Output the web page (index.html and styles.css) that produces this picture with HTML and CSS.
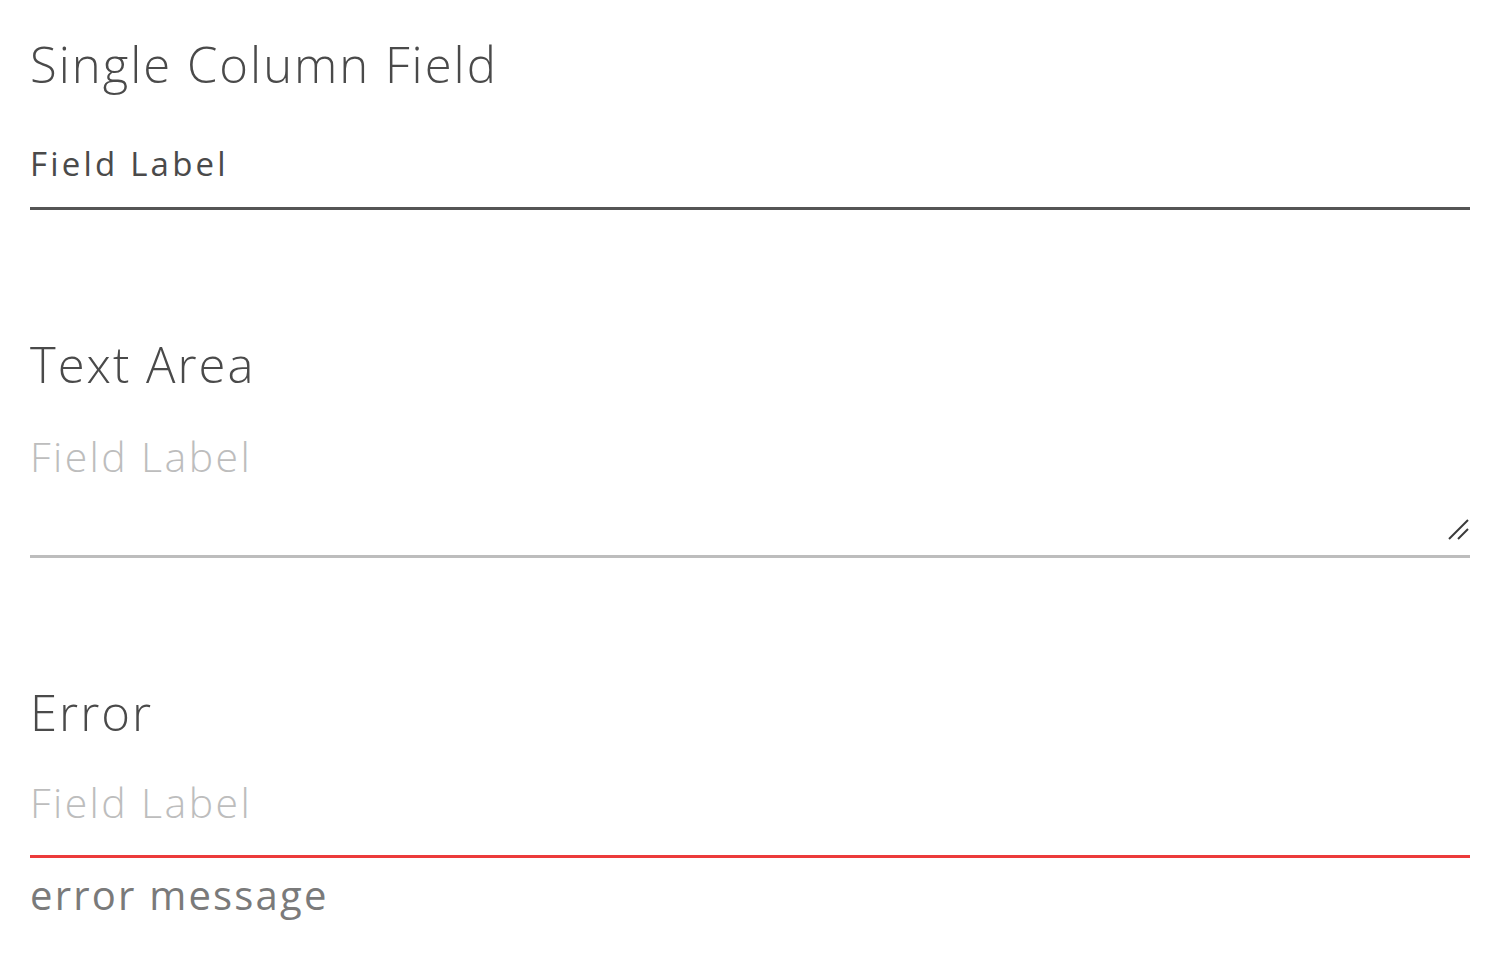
FILE: index.html
```html
<!DOCTYPE html>
<html>
<head>
  <!-- Styles for the form fields -->
  <link rel="stylesheet" href="styles.css">
</head>

<body>

  <!-- Single column input, focused, label floated up -->
  <section class="field-group">
    <h2 class="group-title">Single Column Field</h2>
    <div class="field field-active">
      <span class="field-label">Field Label</span>
    </div>
  </section>

  <!-- Text area with resize handle -->
  <section class="field-group">
    <h2 class="group-title">Text Area</h2>
    <div class="field field-textarea">
      <span class="field-placeholder">Field Label</span>
      <svg class="resizer" width="22" height="22" viewBox="0 0 22 22">
        <path d="M2 21 L21 2" stroke="#3a3a3a" stroke-width="2"/>
        <path d="M11 21 L21 11" stroke="#3a3a3a" stroke-width="2"/>
      </svg>
    </div>
  </section>

  <!-- Field in error state -->
  <section class="field-group">
    <h2 class="group-title">Error</h2>
    <div class="field field-error">
      <span class="field-placeholder">Field Label</span>
    </div>
    <div class="error-message">error message</div>
  </section>

</body>
</html>
```

FILE: styles.css
```css
/* Page */
body {
  margin: 0;
  padding: 40px 30px 30px 30px;
  font-family: "Open Sans", "Noto Sans", sans-serif;
  background: #fff;
  color: #555;
}

/* Each block: title + field */
.field-group {
  margin-bottom: 130px;
}

.field-group:last-child {
  margin-bottom: 0;
}

.group-title {
  margin: 0;
  font-size: 49px;
  font-weight: 300;
  line-height: 48px;
  letter-spacing: 2px;
  color: #4a4a4a;
}

/* The field with its underline */
.field {
  position: relative;
  border-bottom: 3px solid #bdbdbd;
}

.field-active {
  margin-top: 56px;
  padding-bottom: 23px;
  border-bottom-color: #555;
}

.field-label {
  display: block;
  font-size: 33px;
  line-height: 40px;
  letter-spacing: 3.2px;
  color: #4a4a4a;
}

.field-placeholder {
  display: block;
  font-size: 41px;
  font-weight: 300;
  line-height: 46px;
  letter-spacing: 2.4px;
  color: #bdbdbd;
}

.field-textarea {
  margin-top: 45px;
  height: 122px;
}

.field-error {
  margin-top: 43px;
  padding-bottom: 30px;
  border-bottom-color: #ec3b3b;
}

/* Resize handle in the corner of the text area */
.resizer {
  position: absolute;
  right: 1px;
  bottom: 15px;
}

.error-message {
  margin-top: 12px;
  font-size: 40px;
  line-height: 50px;
  letter-spacing: 2.2px;
  color: #7a7a7a;
}
```
